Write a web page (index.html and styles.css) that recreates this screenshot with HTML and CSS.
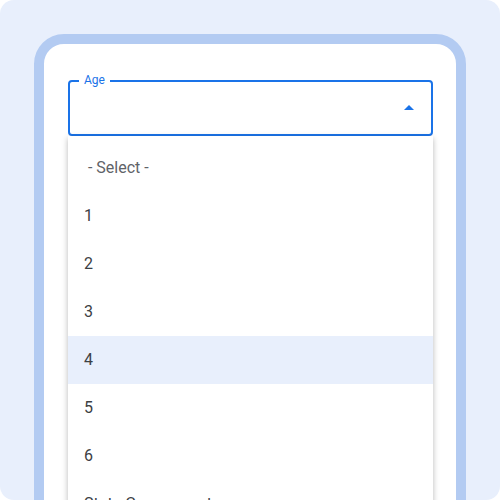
FILE: index.html
```html
<!DOCTYPE html>
<html>
<head>
<meta charset="utf-8">
<link rel="stylesheet" href="styles.css">
</head>
<body>
<div class="panel">
  <div class="frame">
    <div class="field">
      <div class="select">
        <span class="label">Age</span>
        <svg class="arrow" width="10" height="5" viewBox="0 0 10 5"><path d="M0 5 L5 0 L10 5 Z" fill="#1a73e8"/></svg>
      </div>
      <ul class="menu">
        <li class="placeholder">&nbsp;- Select -</li>
        <li>1</li>
        <li>2</li>
        <li>3</li>
        <li class="active">4</li>
        <li>5</li>
        <li>6</li>
        <li>State Government</li>
      </ul>
    </div>
  </div>
</div>
</body>
</html>
```
FILE: styles.css
```css
html, body {
  margin: 0;
  padding: 0;
  background: #ffffff;
}
body {
  font-family: Roboto, "Liberation Sans", sans-serif;
}
.panel {
  width: 500px;
  height: 500px;
  background: #e8effc;
  border-radius: 14px;
  overflow: hidden;
  padding: 34px 0 0 34px;
  box-sizing: border-box;
}
.frame {
  width: 432px;
  height: 520px;
  box-sizing: border-box;
  border: 10px solid #b3cbf2;
  border-radius: 30px;
  background: #ffffff;
  padding: 36px 23px 0 24px;
}
.field {
  position: relative;
}
.select {
  position: relative;
  height: 56px;
  box-sizing: border-box;
  border: 2px solid #1a73e8;
  border-radius: 4px;
}
.label {
  position: absolute;
  left: 9px;
  top: -9px;
  padding: 0 5px;
  background: #ffffff;
  color: #1a73e8;
  font-size: 12px;
  line-height: 14px;
}
.arrow {
  position: absolute;
  right: 17px;
  top: 23px;
}
.menu {
  position: absolute;
  left: 0;
  right: 0;
  top: 56px;
  margin: 0;
  padding: 8px 0 0 0;
  list-style: none;
  background: #ffffff;
  box-shadow: 0 2px 6px rgba(0, 0, 0, 0.28);
}
.menu li {
  height: 48px;
  line-height: 48px;
  padding: 0 16px;
  font-size: 16px;
  color: #3c4043;
}
.menu li.placeholder {
  color: #5f6368;
}
.menu li.active {
  background: #e8effc;
}
```
